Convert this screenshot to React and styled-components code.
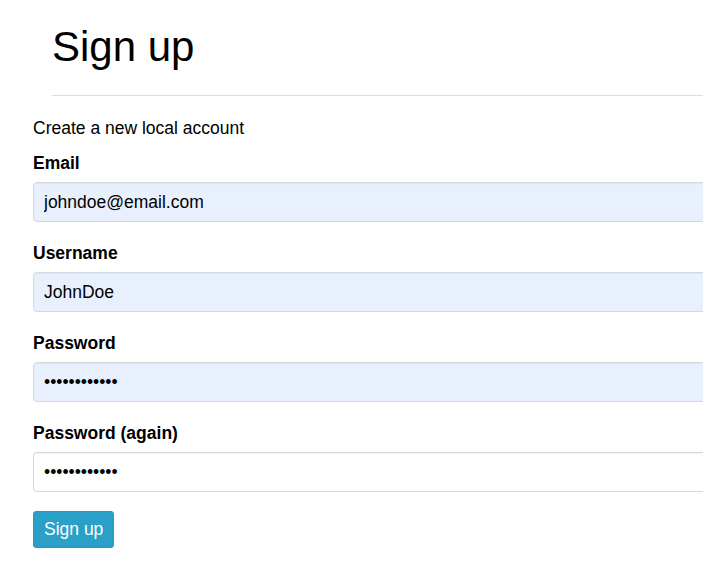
import React from 'react';
import styled, {createGlobalStyle} from 'styled-components';

const GlobalStyle = createGlobalStyle`
  html, body {
    margin: 0;
    padding: 0;
    background: #fff;
    overflow: hidden;
  }
  body {
    font-family: "Liberation Sans", Arial, sans-serif;
    font-size: 17.5px;
    color: #000;
  }
`;

/////////////// LAYOUT /////////////
const Page = styled.div`
  width: 100%;
  overflow: hidden;
`;

const Inner = styled.div`
  width: 790px;
  padding-left: 33px;
`;

const Header = styled.div`
  margin-left: 19px;
  padding-top: 24px;
  border-bottom: 1px solid #dddddd;
  padding-bottom: 25px;
`;

const Title = styled.h1`
  margin: 0;
  font-size: 42px;
  font-weight: normal;
  line-height: 1.1;
`;

const Intro = styled.p`
  margin: 20px 0 11px;
  line-height: 24px;
`;

/////////////// FORM /////////////
const Form = styled.form`
  display: flex;
  flex-direction: column;
  align-items: flex-start;
`;

const Field = styled.div`
  display: flex;
  flex-direction: column;
  width: 100%;
  margin-bottom: 19px;
`;

const Label = styled.label`
  font-weight: bold;
  line-height: 24px;
  margin-bottom: 7px;
`;

const Input = styled.input`
  box-sizing: border-box;
  width: 100%;
  height: 40px;
  padding: 0 10px;
  font-family: inherit;
  font-size: 17.5px;
  color: #000;
  background: ${props => (props.$filled ? '#e8f0fe' : '#ffffff')};
  border: 1px solid ${props => (props.$filled ? '#d3d8df' : '#d6d6d6')};
  border-radius: 4px;
  box-shadow: inset 0 1px 1px rgba(0, 0, 0, 0.04);
  &:focus {
    outline: 0;
  }
`;

const Button = styled.button`
  height: 37px;
  padding: 0 10px;
  font-family: inherit;
  font-size: 17.5px;
  color: #ffffff;
  background: #2a9fc7;
  border: 1px solid #2799c0;
  border-radius: 3px;
  cursor: pointer;
`;

const fields = [
  {id: 'email', label: 'Email', type: 'email', value: 'johndoe@email.com', filled: true},
  {id: 'username', label: 'Username', type: 'text', value: 'JohnDoe', filled: true},
  {id: 'password', label: 'Password', type: 'password', value: 'secretpass12', filled: true},
  {id: 'password2', label: 'Password (again)', type: 'password', value: 'secretpass12', filled: false},
];

export default function App() {
  return (
    <Page>
      <GlobalStyle />
      <Inner>
        <Header>
          <Title>Sign up</Title>
        </Header>
        <Intro>Create a new local account</Intro>
        <Form onSubmit={e => e.preventDefault()}>
          {fields.map(f => (
            <Field key={f.id}>
              <Label htmlFor={f.id}>{f.label}</Label>
              <Input id={f.id} type={f.type} defaultValue={f.value} $filled={f.filled} />
            </Field>
          ))}
          <Button type="submit">Sign up</Button>
        </Form>
      </Inner>
    </Page>
  );
}
